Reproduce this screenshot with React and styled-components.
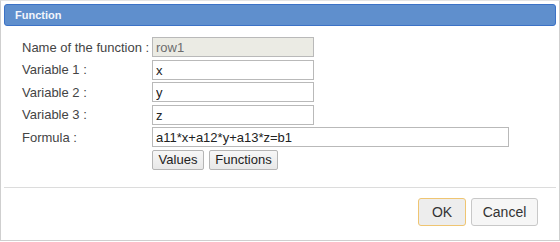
import React from "react";
import styled, { createGlobalStyle } from "styled-components";

const Global = createGlobalStyle`
  html, body { margin: 0; padding: 0; background: #fff; }
  body { font-family: "Liberation Sans", Arial, sans-serif; }
  * { box-sizing: border-box; }
`;

const Dialog = styled.div`
  width: 560px;
  height: 241px;
  border: 1px solid #cfcfcf;
  border-top-color: #e4e4e4;
  padding: 3px;
  background: #fff;
  display: flex;
  flex-direction: column;
`;

const TitleBar = styled.div`
  height: 22px;
  flex: none;
  background: #5f8fcd;
  border: 1px solid #3c72c6;
  border-radius: 3px;
  display: flex;
  align-items: center;
  padding-left: 10px;
`;

const Title = styled.span`
  color: #f2f5fb;
  font-weight: bold;
  font-size: 11px;
`;

const Content = styled.div`
  flex: 1;
  padding: 11px 18px 0 18px;
`;

const Form = styled.div`
  display: grid;
  grid-template-columns: 130px auto;
  grid-auto-rows: 20px;
  row-gap: 2.6px;
  align-items: center;
`;

const Label = styled.label`
  font-size: 13px;
  color: #444;
  white-space: nowrap;
`;

const Input = styled.input`
  width: ${(p) => p.$w}px;
  height: 20px;
  border: 1px solid #b9b9b9;
  border-radius: 0;
  padding: 1px 3px 0;
  font-family: "Liberation Sans", Arial, sans-serif;
  font-size: 13px;
  color: ${(p) => (p.disabled ? "#6d6d6d" : "#222")};
  background: ${(p) => (p.disabled ? "#ebebe4" : "#fff")};
  outline: none;
`;

const SmallButtons = styled.div`
  grid-column: 2;
  display: flex;
  gap: 5px;
`;

const SmallButton = styled.button`
  height: 20px;
  padding: 0 5px;
  border: 1px solid #b5b5b5;
  border-radius: 2px;
  background: linear-gradient(#f7f7f7, #e8e8e8);
  font-family: "Liberation Sans", Arial, sans-serif;
  font-size: 13px;
  color: #222;
  width: ${(p) => p.$w}px;
`;

const ButtonPane = styled.div`
  flex: none;
  border-top: 1px solid #dcdcdc;
  padding: 10px 18px 11px 0;
  display: flex;
  justify-content: flex-end;
  gap: 5px;
`;

const PaneButton = styled.button`
  height: 28px;
  width: ${(p) => p.$w}px;
  border: 1px solid ${(p) => (p.$focus ? "#efc572" : "#c8c8c8")};
  border-radius: 3px;
  background: ${(p) => (p.$focus ? "#ededed" : "#f6f6f6")};
  font-family: "Liberation Sans", Arial, sans-serif;
  font-size: 14px;
  color: #333;
  padding: 0;
`;

const rows = [
  { label: "Name of the function :", value: "row1", disabled: true, w: 162 },
  { label: "Variable 1 :", value: "x", w: 162 },
  { label: "Variable 2 :", value: "y", w: 162 },
  { label: "Variable 3 :", value: "z", w: 162 },
  { label: "Formula :", value: "a11*x+a12*y+a13*z=b1", w: 357 },
];

export default function App() {
  return (
    <>
      <Global />
      <Dialog>
        <TitleBar>
          <Title>Function</Title>
        </TitleBar>
        <Content>
          <Form>
            {rows.map((r) => (
              <React.Fragment key={r.label}>
                <Label>{r.label}</Label>
                <Input
                  $w={r.w}
                  defaultValue={r.value}
                  disabled={r.disabled}
                />
              </React.Fragment>
            ))}
            <SmallButtons>
              <SmallButton $w={52}>Values</SmallButton>
              <SmallButton $w={69}>Functions</SmallButton>
            </SmallButtons>
          </Form>
        </Content>
        <ButtonPane>
          <PaneButton $w={48} $focus>OK</PaneButton>
          <PaneButton $w={67}>Cancel</PaneButton>
        </ButtonPane>
      </Dialog>
    </>
  );
}
